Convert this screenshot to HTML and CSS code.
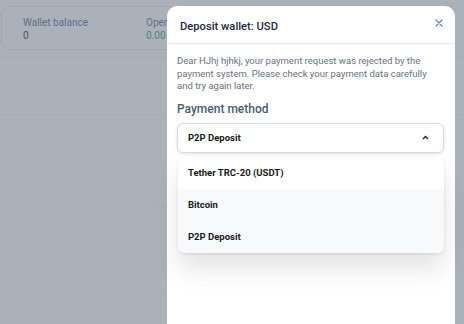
FILE: index.html
```html
<!DOCTYPE html>
<html>
<head>
<meta charset="utf-8">
<link rel="stylesheet" href="styles.css">
</head>
<body>
<div class="page">
  <div class="card">
    <div class="stat">
      <div class="stat-label">Wallet balance</div>
      <div class="stat-value">0</div>
    </div>
    <div class="stat">
      <div class="stat-label">Open</div>
      <div class="stat-value green">0.00</div>
    </div>
  </div>
  <div class="rows">
    <div class="row r1"></div>
    <div class="row r2"></div>
    <div class="row r3"></div>
    <div class="row r4"></div>
  </div>
</div>

<div class="modal">
  <div class="modal-header">
    <div class="modal-title">Deposit wallet: USD</div>
    <button class="close" aria-label="Close">
      <svg width="8" height="8" viewBox="0 0 8 8"><path d="M1 1L7 7M7 1L1 7" stroke="#6a80ad" stroke-width="1.2" stroke-linecap="round"/></svg>
    </button>
  </div>
  <div class="modal-body">
    <p class="notice">Dear HJhj hjhkj, your payment request was rejected by the payment system. Please check your payment data carefully and try again later.</p>
    <div class="field-label">Payment method</div>
    <div class="select-wrap">
      <div class="select">
        <span>P2P Deposit</span>
        <svg width="7" height="5" viewBox="0 0 7 5"><path d="M1 4L3.5 1.5L6 4" fill="none" stroke="#222" stroke-width="1.4"/></svg>
      </div>
      <ul class="menu">
        <li class="opt">Tether TRC-20 (USDT)</li>
        <li class="opt hover">Bitcoin</li>
        <li class="opt hover">P2P Deposit</li>
      </ul>
    </div>
  </div>
</div>
</body>
</html>
```

FILE: styles.css
```css
* { box-sizing: border-box; }
html, body { margin: 0; padding: 0; }
body {
  width: 464px;
  height: 324px;
  overflow: hidden;
  background: #abb1b9;
  font-family: Roboto, "Noto Sans", sans-serif;
}
.page {
  padding: 6px 0 0 1px;
}
.card {
  height: 44px;
  width: 440px;
  border: 1px solid #a1a8b2;
  border-radius: 9px;
  display: flex;
  padding: 9px 0 0 21px;
}
.stat { width: 123px; flex-shrink: 0; }
.stat-label {
  font-size: 10px;
  color: #5f6f8b;
  line-height: 13px;
}
.stat-value {
  font-size: 10px;
  color: #4a5260;
  line-height: 13px;
}
.stat-value.green { color: #3f8a78; }
.rows { margin-left: -1px; }
.row { border-bottom: 1px solid #a4abb4; }
.r1 { height: 8px; }
.r2 { height: 62px; border-color: #a7aeb7; }
.r3 { height: 86px; border-color: #a7aeb7; }
.r4 { height: 86px; border-color: #a7aeb7; }

.modal {
  position: fixed;
  left: 167px;
  top: 6px;
  width: 288px;
  bottom: 0;
  background: #fff;
  border-radius: 10px 10px 0 0;
}
.modal-header {
  height: 38px;
  border-bottom: 1px solid #e6e8ec;
  display: flex;
  align-items: center;
  justify-content: space-between;
  padding: 0 13px 0 13px;
}
.modal-title {
  font-size: 11.2px;
  font-weight: 500;
  color: #1f2a44;
  padding-top: 3px;
}
.close {
  border: 0;
  background: none;
  padding: 0;
  display: flex;
  margin-top: -4px;
  margin-right: -1px;
}
.modal-body {
  padding: 11px 11px 0 10px;
}
.notice {
  margin: 0;
  font-size: 9.5px;
  line-height: 12.5px;
  color: #6b7280;
}
.field-label {
  margin-top: 8px;
  font-size: 12px;
  font-weight: 500;
  color: #4c5b73;
  line-height: 16px;
}
.select-wrap {
  position: relative;
  margin-top: 6px;
}
.select {
  height: 30px;
  border: 1px solid #d6d9de;
  border-radius: 6px;
  box-shadow: 0 1px 3px rgba(0,0,0,0.12);
  display: flex;
  align-items: center;
  justify-content: space-between;
  padding: 0 14px 0 10px;
  font-size: 9.5px;
  font-weight: 700;
  color: #1a1a1a;
}
.menu {
  position: absolute;
  left: 1px;
  right: 0;
  top: 34px;
  margin: 0;
  padding: 0;
  list-style: none;
  background: #fff;
  border-radius: 6px;
  overflow: hidden;
  box-shadow: 0 16px 26px rgba(0,0,0,0.11), 0 1px 3px rgba(0,0,0,0.10);
}
.opt {
  height: 32px;
  display: flex;
  align-items: center;
  padding-left: 10px;
  font-size: 9.5px;
  font-weight: 700;
  color: #1a1a1a;
}
.opt.hover { background: #f8f9fb; }
```
